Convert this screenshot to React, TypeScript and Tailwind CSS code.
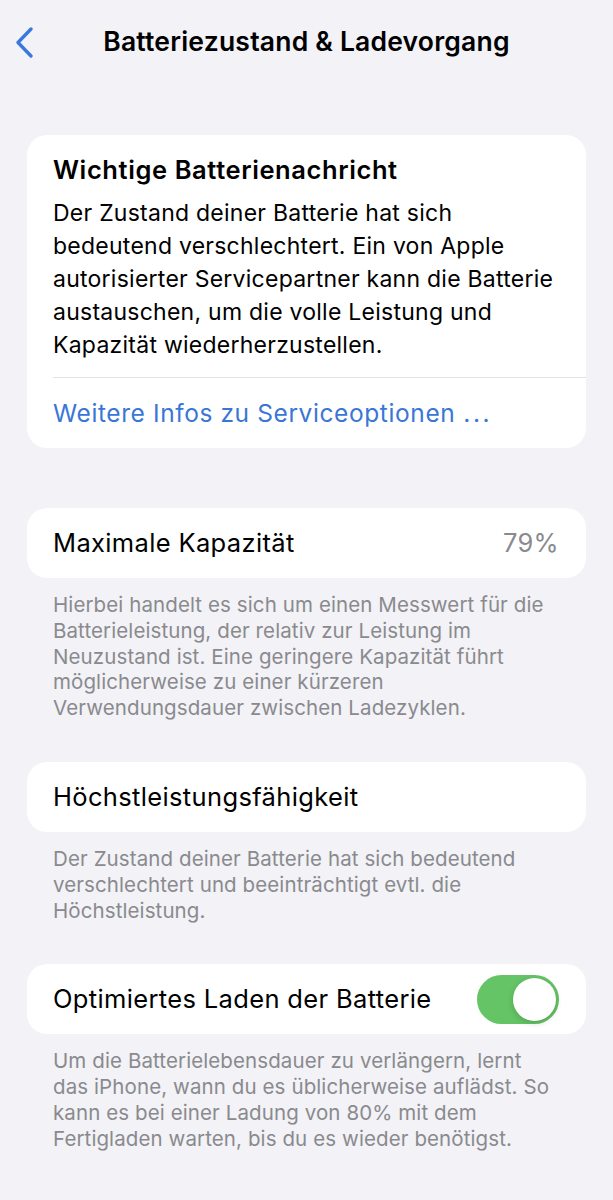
import React from 'react';

const font = { fontFamily: 'Inter, "Noto Sans", sans-serif' };

const Toggle: React.FC<{ on: boolean }> = ({ on }) => (
    <div className={`w-[82px] h-[49px] rounded-full p-[3px] flex ${on ? 'bg-[#65c466] justify-end' : 'bg-[#e9e9ea] justify-start'}`}>
        <div className="w-[43px] h-[43px] rounded-full bg-white shadow-[0_2px_6px_rgba(0,0,0,0.18)]" />
    </div>
);

const Footnote: React.FC<{ lines: string[] }> = ({ lines }) => (
    <p className="px-[26px] pt-[14px] text-[20.5px] leading-[25.8px] text-[#8a8a8e] tracking-[0.1px]">
        {lines.map((l, i) => (
            <span key={i} className="block whitespace-nowrap">{l}</span>
        ))}
    </p>
);

const rowText = 'text-[25.5px] tracking-[0.35px]';

const App: React.FC = () => {
    return (
        <div className="min-h-screen w-[613px] bg-[#f2f2f7] text-black" style={font}>
            <header className="h-[84px] grid grid-cols-[1fr_auto_1fr] items-center">
                <div className="pl-[14px] flex items-center">
                    <svg width="21" height="31" viewBox="0 0 21 31" fill="none">
                        <polyline points="17,2 4,15.5 17,29" stroke="#3a78dd" strokeWidth="3.3" strokeLinecap="round" strokeLinejoin="round" />
                    </svg>
                </div>
                <h1 className="text-[26.5px] font-semibold tracking-[0.2px]">Batteriezustand &amp; Ladevorgang</h1>
                <div />
            </header>

            <main className="px-[27px] pt-[51px]">
                <section className="bg-white rounded-[20px] overflow-hidden">
                    <div className="pl-[26px] pr-[10px] pt-[19px] pb-[15px]">
                        <h2 className="text-[25.5px] leading-[32px] font-semibold tracking-[0.6px]">Wichtige Batterienachricht</h2>
                        <p className="mt-[11px] text-[23px] leading-[33px] tracking-[0.25px]">
                            {[
                                'Der Zustand deiner Batterie hat sich',
                                'bedeutend verschlechtert. Ein von Apple',
                                'autorisierter Servicepartner kann die Batterie',
                                'austauschen, um die volle Leistung und',
                                'Kapazität wiederherzustellen.',
                            ].map((l, i) => (
                                <span key={i} className="block whitespace-nowrap">{l}</span>
                            ))}
                        </p>
                    </div>
                    <div className="ml-[26px] h-px bg-[#e3e3e6]" />
                    <div className="pl-[26px] h-[70px] flex items-center text-[24.5px] tracking-[0.6px] text-[#3a76d6]">
                        Weitere Infos zu Serviceoptionen <span className="ml-[8px] tracking-[2.5px]">...</span>
                    </div>
                </section>

                <section className={`mt-[60px] bg-white rounded-[20px] h-[70px] pl-[26px] pr-[27px] flex items-center justify-between ${rowText}`}>
                    <span>Maximale Kapazität</span>
                    <span className="text-[#8a8a8e]">79%</span>
                </section>
                <Footnote
                    lines={[
                        'Hierbei handelt es sich um einen Messwert für die',
                        'Batterieleistung, der relativ zur Leistung im',
                        'Neuzustand ist. Eine geringere Kapazität führt',
                        'möglicherweise zu einer kürzeren',
                        'Verwendungsdauer zwischen Ladezyklen.',
                    ]}
                />

                <section className={`mt-[41px] bg-white rounded-[20px] h-[70px] pl-[26px] pr-[27px] flex items-center ${rowText}`}>
                    <span>Höchstleistungsfähigkeit</span>
                </section>
                <Footnote
                    lines={[
                        'Der Zustand deiner Batterie hat sich bedeutend',
                        'verschlechtert und beeinträchtigt evtl. die',
                        'Höchstleistung.',
                    ]}
                />

                <section className={`mt-[41px] bg-white rounded-[20px] h-[70px] pl-[26px] pr-[27px] flex items-center justify-between ${rowText}`}>
                    <span>Optimiertes Laden der Batterie</span>
                    <Toggle on />
                </section>
                <Footnote
                    lines={[
                        'Um die Batterielebensdauer zu verlängern, lernt',
                        'das iPhone, wann du es üblicherweise auflädst. So',
                        'kann es bei einer Ladung von 80% mit dem',
                        'Fertigladen warten, bis du es wieder benötigst.',
                    ]}
                />
            </main>
        </div>
    );
};

export default App;
